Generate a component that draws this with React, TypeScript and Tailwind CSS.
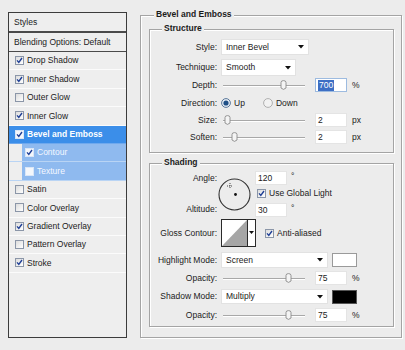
import React from "react";

function Check({ on, light }: { on: boolean; light?: boolean }) {
  return (
    <span
      className={
        "inline-flex items-center justify-center w-[9px] h-[9px] shrink-0 border " +
        (light ? "border-[#d9e6f7] bg-[#f4f7fb]" : "border-[#8b96a8] bg-gradient-to-br from-[#dcdcdc] to-[#ffffff]")
      }
    >
      {on && (
        <svg width="7" height="7" viewBox="0 0 7 7">
          <path d="M1 3.4 L2.8 5.4 L6 1" fill="none" stroke="#1f3f96" strokeWidth="1.4" />
        </svg>
      )}
    </span>
  );
}

function Radio({ on }: { on: boolean }) {
  return (
    <svg width="10" height="10" viewBox="0 0 10 10" className="shrink-0">
      <circle cx="5" cy="5" r="4.4" fill={on ? "#e9eef5" : "#f2f2f2"} stroke={on ? "#4a6a90" : "#a8a8a8"} strokeWidth="0.9" />
      {on && <circle cx="5" cy="5" r="2.6" fill="#1f4f86" />}
    </svg>
  );
}

function Arrow() {
  return (
    <svg width="6" height="4" viewBox="0 0 6 4" className="shrink-0">
      <path d="M0 0 H6 L3 3.5 Z" fill="#111" />
    </svg>
  );
}

function Select({ w, text, h = 16 }: { w: number; text: string; h?: number }) {
  return (
    <div
      className="flex items-center justify-between bg-white border border-[#e2e2e2] pl-[4px] pr-[4px]"
      style={{ width: w, height: h }}
    >
      <span>{text}</span>
      <Arrow />
    </div>
  );
}

function Thumb() {
  return (
    <svg width="7" height="10" viewBox="0 0 7 10">
      <path d="M1 2.5 Q1 0.6 3.5 0.6 Q6 0.6 6 2.5 V8 L3.5 9.4 L1 8 Z" fill="#f4f4f4" stroke="#8a8a8a" strokeWidth="0.9" />
    </svg>
  );
}

function Slider({ pos }: { pos: number }) {
  return (
    <div className="relative w-[82px] h-[12px] ml-[2px]">
      <div className="absolute left-0 right-0 top-[6px] h-px bg-[#a8a8a8]" />
      <div className="absolute left-0 right-0 top-[7px] h-px bg-white" />
      <div className="absolute top-[1px]" style={{ left: pos }}>
        <Thumb />
      </div>
    </div>
  );
}

function Field({ text, sel }: { text: string; sel?: boolean }) {
  return (
    <div
      className={
        "w-[32px] h-[14px] bg-white border flex items-center pl-[2px] " +
        (sel ? "border-[#9dbbe0]" : "border-[#e4e4e4]")
      }
    >
      {sel ? <span className="bg-[#3d6fc4] text-white px-[1px] leading-[11px]">{text}</span> : <span>{text}</span>}
    </div>
  );
}

function Label({ children }: { children: React.ReactNode }) {
  return <div className="w-[67px] shrink-0 text-right pr-[0px]">{children}</div>;
}

const rowsList: { label: string; on: boolean; kind?: "sel" | "sub" }[] = [
  { label: "Drop Shadow", on: true },
  { label: "Inner Shadow", on: true },
  { label: "Outer Glow", on: false },
  { label: "Inner Glow", on: true },
  { label: "Bevel and Emboss", on: true, kind: "sel" },
  { label: "Contour", on: true, kind: "sub" },
  { label: "Texture", on: false, kind: "sub" },
  { label: "Satin", on: false },
  { label: "Color Overlay", on: false },
  { label: "Gradient Overlay", on: true },
  { label: "Pattern Overlay", on: false },
  { label: "Stroke", on: true },
];

export default function App() {
  return (
    <div className="w-[405px] h-[350px] bg-[#ececec] flex items-start font-['Liberation_Sans',Arial,sans-serif] text-[8.5px] text-[#1b1b1b] leading-none overflow-hidden">
      {/* Left list */}
      <div className="ml-[8px] mt-[12px] w-[119px] h-[326px] border border-[#3c3c3c] bg-[#eeeeee] flex flex-col">
        <div className="h-[20px] shrink-0 flex items-center pl-[5px] border-b-2 border-[#4a4a4a]">Styles</div>
        <div className="h-[19px] shrink-0 flex items-center pl-[5px] border-b border-[#4a4a4a]">Blending Options: Default</div>
        {rowsList.map((r) => {
          if (r.kind === "sel")
            return (
              <div key={r.label} className="h-[18.4px] shrink-0 flex items-center gap-[3px] pl-[6px] bg-[#3b8ee9] text-white font-bold border-b border-[#6fa9ee]">
                <Check on={r.on} light />
                <span>{r.label}</span>
              </div>
            );
          if (r.kind === "sub")
            return (
              <div key={r.label} className="h-[18.4px] shrink-0 flex border-b border-[#b9d4f4]">
                <div className="w-[13px] shrink-0 bg-[#eeeeee]" />
                <div className="flex-1 flex items-center gap-[3px] pl-[3px] bg-[#8fbaef] text-[#f4f8ff]">
                  <Check on={r.on} light />
                  <span>{r.label}</span>
                </div>
              </div>
            );
          return (
            <div key={r.label} className="h-[18.4px] shrink-0 flex items-center gap-[3px] pl-[6px] border-b border-[#fbfbfb]">
              <Check on={r.on} />
              <span>{r.label}</span>
            </div>
          );
        })}
      </div>

      {/* Right group */}
      <div className="relative ml-[13px] mt-[15px] w-[262px] h-[323px] border border-[#a4a4a4] shadow-[inset_1px_1px_0_#ffffff,1px_1px_0_#ffffff]">
        <span className="absolute left-[13px] top-[-6px] px-[2px] bg-[#ececec] font-bold">Bevel and Emboss</span>

        {/* Structure */}
        <div className="relative ml-[8px] mt-[13px] w-[245px] h-[124px] border border-[#a4a4a4] shadow-[inset_1px_1px_0_#ffffff,1px_1px_0_#ffffff] flex flex-col">
          <span className="absolute left-[12px] top-[-6px] px-[2px] bg-[#ececec] font-bold">Structure</span>
          <div className="mt-[9px] h-[16px] flex items-center gap-[4px]">
            <Label>Style:</Label>
            <Select w={88} text="Inner Bevel" />
          </div>
          <div className="mt-[4px] h-[17px] flex items-center gap-[4px]">
            <Label>Technique:</Label>
            <Select w={75} h={17} text="Smooth" />
          </div>
          <div className="mt-[1px] h-[16px] flex items-center gap-[4px]">
            <Label>Depth:</Label>
            <Slider pos={57} />
            <div className="ml-[6px]"><Field text="700" sel /></div>
            <span className="ml-[1px]">%</span>
          </div>
          <div className="mt-[2px] h-[16px] flex items-center gap-[4px]">
            <Label>Direction:</Label>
            <div className="flex items-center gap-[3px]">
              <Radio on />
              <span>Up</span>
            </div>
            <div className="flex items-center gap-[3px] ml-[14px]">
              <Radio on={false} />
              <span>Down</span>
            </div>
          </div>
          <div className="mt-[1px] h-[16px] flex items-center gap-[4px]">
            <Label>Size:</Label>
            <Slider pos={1} />
            <div className="ml-[6px]"><Field text="2" /></div>
            <span className="ml-[1px]">px</span>
          </div>
          <div className="mt-[1px] h-[16px] flex items-center gap-[4px]">
            <Label>Soften:</Label>
            <Slider pos={8} />
            <div className="ml-[6px]"><Field text="2" /></div>
            <span className="ml-[1px]">px</span>
          </div>
        </div>

        {/* Shading */}
        <div className="relative ml-[8px] mt-[10px] w-[245px] h-[164px] border border-[#a4a4a4] shadow-[inset_1px_1px_0_#ffffff,1px_1px_0_#ffffff] flex flex-col">
          <span className="absolute left-[12px] top-[-6px] px-[2px] bg-[#ececec] font-bold">Shading</span>

          <div className="mt-[7px] h-[46px] flex">
            <div className="w-[67px] shrink-0 flex flex-col justify-between items-end pt-[3px] pb-[4px]">
              <span>Angle:</span>
              <span>Altitude:</span>
            </div>
            <div className="ml-[1px] mt-[7px] w-[34px] shrink-0">
              <svg width="33" height="33" viewBox="0 0 33 33">
                <circle cx="16.5" cy="16.5" r="15.5" fill="none" stroke="#333" strokeWidth="1.1" />
                <circle cx="17.5" cy="16.5" r="1.4" fill="#111" />
                <path d="M12 5 V11 M9 8 H15" stroke="#222" strokeWidth="0.8" strokeDasharray="1 1" />
              </svg>
            </div>
            <div className="ml-[3px] flex flex-col">
              <div className="h-[14px] flex items-center">
                <Field text="120" />
                <span className="ml-[4px] -mt-[4px]">°</span>
              </div>
              <div className="mt-[1px] h-[14px] flex items-center gap-[3px] ml-[2px]">
                <Check on />
                <span>Use Global Light</span>
              </div>
              <div className="mt-[3px] h-[14px] flex items-center">
                <Field text="30" />
                <span className="ml-[4px] -mt-[4px]">°</span>
              </div>
            </div>
          </div>

          <div className="mt-[2px] h-[28px] flex items-center gap-[4px]">
            <Label>Gloss Contour:</Label>
            <div className="flex items-stretch h-[28px]">
              <div className="w-[27px] h-[28px] border border-[#2a2a2a] bg-white">
                <svg width="25" height="26" viewBox="0 0 25 26">
                  <path d="M0 26 L25 0 V26 Z" fill="#a6a6a6" />
                </svg>
              </div>
              <div className="w-[8px] border border-l-0 border-[#2a2a2a] bg-white flex items-center justify-center">
                <svg width="5" height="4" viewBox="0 0 5 4">
                  <path d="M0 0 H5 L2.5 3 Z" fill="#111" />
                </svg>
              </div>
            </div>
            <div className="ml-[5px] flex items-center gap-[3px]">
              <Check on />
              <span>Anti-aliased</span>
            </div>
          </div>

          <div className="mt-[5px] h-[16px] flex items-center gap-[4px]">
            <Label>Highlight Mode:</Label>
            <Select w={107} text="Screen" />
            <div className="w-[25px] h-[14px] bg-white border border-[#9a9a9a]" />
          </div>
          <div className="mt-[3px] h-[14px] flex items-center gap-[4px]">
            <Label>Opacity:</Label>
            <Slider pos={62} />
            <div className="ml-[6px]"><Field text="75" /></div>
            <span className="ml-[1px]">%</span>
          </div>
          <div className="mt-[4px] h-[15px] flex items-center gap-[4px]">
            <Label>Shadow Mode:</Label>
            <Select w={107} h={15} text="Multiply" />
            <div className="w-[25px] h-[14px] bg-black border border-[#555]" />
          </div>
          <div className="mt-[4px] h-[14px] flex items-center gap-[4px]">
            <Label>Opacity:</Label>
            <Slider pos={62} />
            <div className="ml-[6px]"><Field text="75" /></div>
            <span className="ml-[1px]">%</span>
          </div>
        </div>
      </div>
    </div>
  );
}
